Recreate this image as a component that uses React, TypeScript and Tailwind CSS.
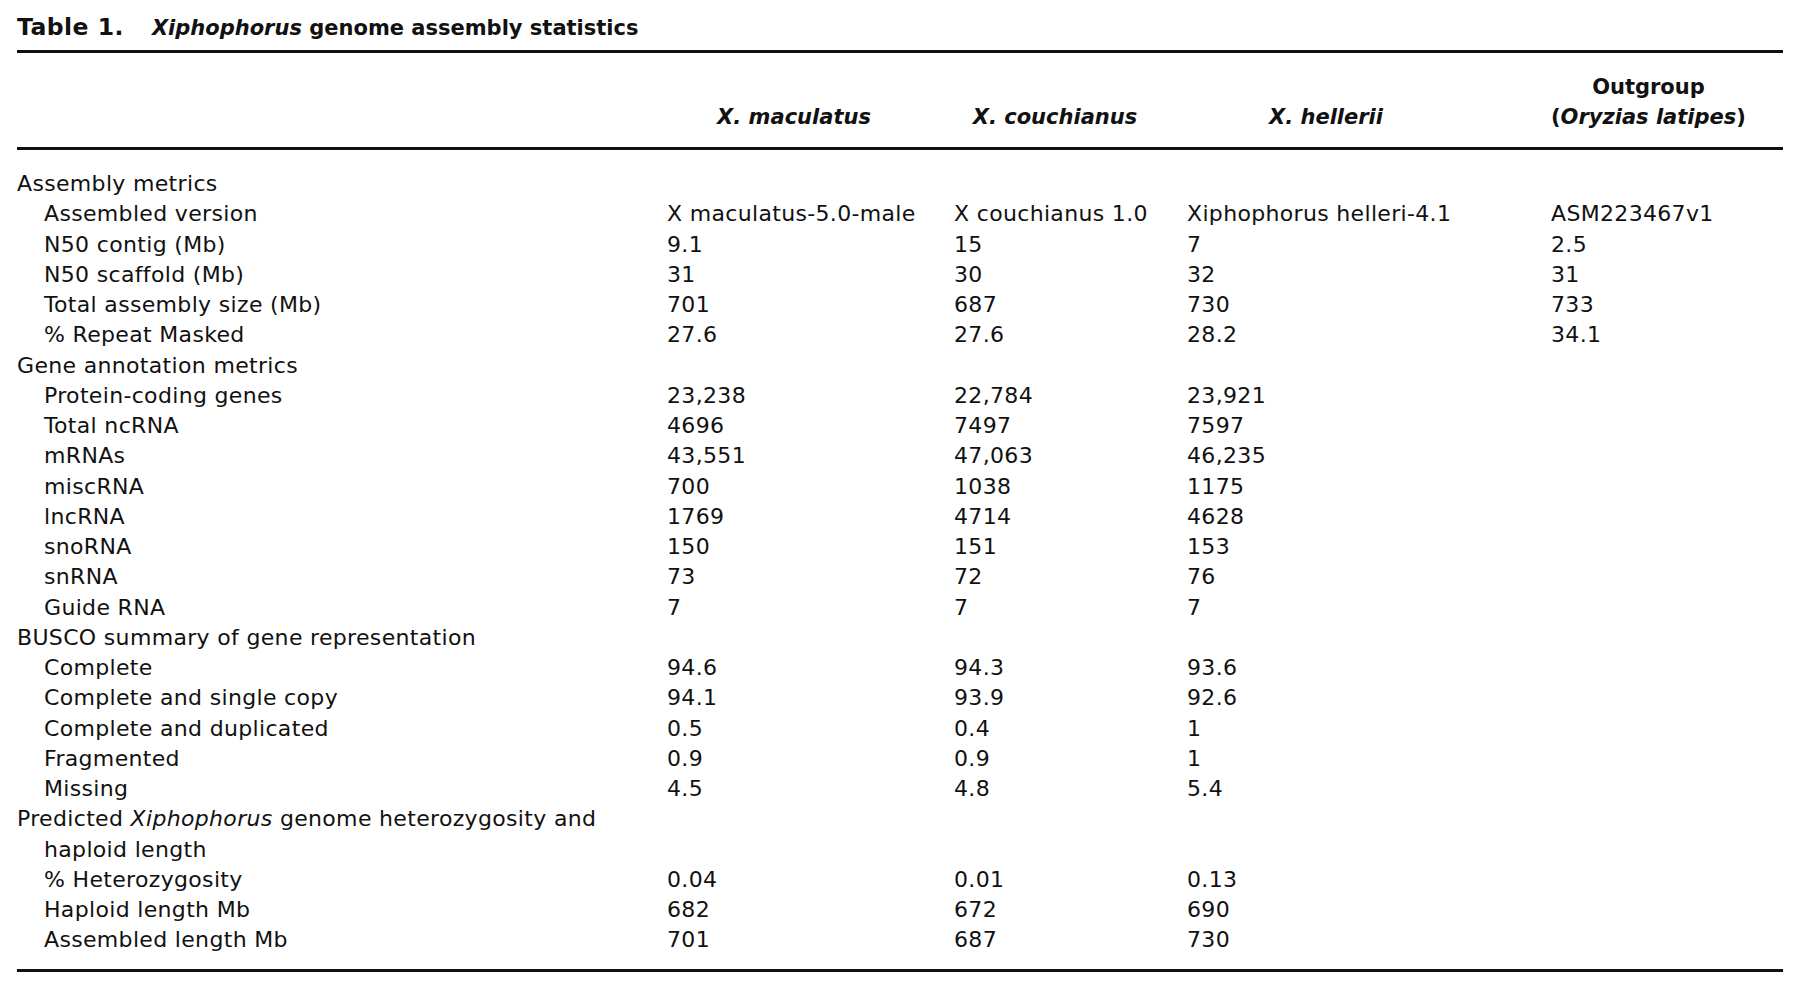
const cols = 'grid grid-cols-[650px_287px_233px_364px_1fr]';

type Row = { label: React.ReactNode; group?: boolean; values?: string[] };

const rows: Row[] = [
  { label: 'Assembly metrics', group: true },
  { label: 'Assembled version', values: ['X maculatus-5.0-male', 'X couchianus 1.0', 'Xiphophorus helleri-4.1', 'ASM223467v1'] },
  { label: 'N50 contig (Mb)', values: ['9.1', '15', '7', '2.5'] },
  { label: 'N50 scaffold (Mb)', values: ['31', '30', '32', '31'] },
  { label: 'Total assembly size (Mb)', values: ['701', '687', '730', '733'] },
  { label: '% Repeat Masked', values: ['27.6', '27.6', '28.2', '34.1'] },
  { label: 'Gene annotation metrics', group: true },
  { label: 'Protein-coding genes', values: ['23,238', '22,784', '23,921'] },
  { label: 'Total ncRNA', values: ['4696', '7497', '7597'] },
  { label: 'mRNAs', values: ['43,551', '47,063', '46,235'] },
  { label: 'miscRNA', values: ['700', '1038', '1175'] },
  { label: 'lncRNA', values: ['1769', '4714', '4628'] },
  { label: 'snoRNA', values: ['150', '151', '153'] },
  { label: 'snRNA', values: ['73', '72', '76'] },
  { label: 'Guide RNA', values: ['7', '7', '7'] },
  { label: 'BUSCO summary of gene representation', group: true },
  { label: 'Complete', values: ['94.6', '94.3', '93.6'] },
  { label: 'Complete and single copy', values: ['94.1', '93.9', '92.6'] },
  { label: 'Complete and duplicated', values: ['0.5', '0.4', '1'] },
  { label: 'Fragmented', values: ['0.9', '0.9', '1'] },
  { label: 'Missing', values: ['4.5', '4.8', '5.4'] },
  {
    label: (
      <>
        Predicted <i>Xiphophorus</i> genome heterozygosity and
      </>
    ),
    group: true,
  },
  // wrapped continuation of the heading above, hanging indent
  { label: 'haploid length' },
  { label: '% Heterozygosity', values: ['0.04', '0.01', '0.13'] },
  { label: 'Haploid length Mb', values: ['682', '672', '690'] },
  { label: 'Assembled length Mb', values: ['701', '687', '730'] },
];

export default function App() {
  return (
    <div className="min-h-screen bg-white text-[#111] font-['DejaVu_Sans',sans-serif] text-[22px]">
      <div className="w-[1766px] ml-[17px] pt-[12px]">
        <h1 className="leading-[30px] h-[30px] text-[21px] whitespace-nowrap">
          <span className="font-bold text-[23.5px] tracking-[0.02em]">Table 1.</span>
          <span className="ml-[28px] font-semibold">
            <i>Xiphophorus</i> genome assembly statistics
          </span>
        </h1>

        <div className="mt-[8px] h-[3px] bg-[#111]" />

        {/* column headings */}
        <div className={`${cols} items-end pt-[19px] pb-[15px] leading-[30px] text-[21px] font-bold italic`}>
          <div />
          <div className="text-center pr-[33px]">X. maculatus</div>
          <div className="text-center pr-[31px]">X. couchianus</div>
          <div className="text-center pr-[86px]">X. hellerii</div>
          <div className="text-center pr-[54px] whitespace-nowrap">
            <div className="not-italic">Outgroup</div>
            <div>
              <span className="not-italic">(</span>Oryzias latipes<span className="not-italic">)</span>
            </div>
          </div>
        </div>

        <div className="h-[3px] bg-[#111]" />

        {/* body */}
        <div className="pt-[19px] pb-[13px] tracking-[0.015em]">
          {rows.map((r, i) => (
            <div key={i} className={`${cols} h-[30.25px] leading-[30.25px] whitespace-nowrap`}>
              <div className={r.group ? '' : 'pl-[27px]'}>{r.label}</div>
              {[0, 1, 2, 3].map((c) => (
                <div key={c}>{r.values?.[c] ?? ''}</div>
              ))}
            </div>
          ))}
        </div>

        <div className="h-[3px] bg-[#111]" />
      </div>
    </div>
  );
}
